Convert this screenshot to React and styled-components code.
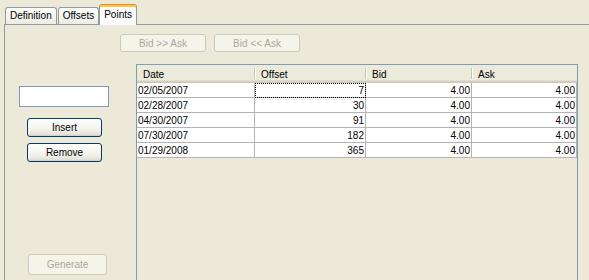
import React from "react";
import styled, { createGlobalStyle } from "styled-components";

const GlobalStyle = createGlobalStyle`
  html, body {
    margin: 0;
    padding: 0;
    background: #ece9d8;
  }
  body {
    font-family: "Liberation Sans", Arial, sans-serif;
    font-size: 10px;
    color: #000;
    overflow: hidden;
  }
`;

const Window = styled.div`
  width: 589px;
  height: 280px;
  box-sizing: border-box;
  padding: 4px 0 0 4px;
  display: flex;
  flex-direction: column;
  overflow: hidden;
`;

/* tab strip */
const TabStrip = styled.div`
  display: flex;
  align-items: flex-end;
  height: 20px;
  padding-left: 1px;
  gap: 1px;
`;

const Tab = styled.div`
  position: relative;
  box-sizing: border-box;
  height: ${(p) => (p.active ? "21px" : "17px")};
  margin-bottom: ${(p) => (p.active ? "-1px" : "0")};
  margin-left: ${(p) => (p.active ? "-1px" : "0")};
  z-index: ${(p) => (p.active ? 2 : 1)};
  padding: ${(p) => (p.active ? "4px 4px 0" : "2px 4px 0")};
  border: 1px solid #919b9c;
  border-bottom: none;
  border-top: ${(p) => (p.active ? "1px solid #e68b2c" : "1px solid #919b9c")};
  border-radius: 3px 3px 0 0;
  background: ${(p) =>
    p.active ? "#fcfcfe" : "linear-gradient(#ffffff, #f3f3ef 60%, #ecebe4)"};
  box-shadow: ${(p) => (p.active ? "inset 0 2px 0 #ffc83c" : "none")};
  white-space: nowrap;
  line-height: 12px;
`;

/* tab body */
const Panel = styled.div`
  flex: 1;
  border-top: 1px solid #919b9c;
  border-left: 1px solid #919b9c;
  display: flex;
  flex-direction: column;
  min-height: 0;
`;

const ButtonRow = styled.div`
  display: flex;
  gap: 8px;
  padding: 9px 0 0 115px;
`;

const Button = styled.button`
  box-sizing: border-box;
  width: ${(p) => p.w || 75}px;
  height: ${(p) => p.h || 19}px;
  margin: 0;
  padding: 0;
  font-family: inherit;
  font-size: 10px;
  color: ${(p) => (p.disabled ? "#aca899" : "#000")};
  border: 1px solid ${(p) => (p.disabled ? "#cdcabb" : "#003c74")};
  border-radius: 3px;
  background: ${(p) =>
    p.disabled
      ? "#f5f4ea"
      : "linear-gradient(#ffffff, #f4f3ee 60%, #e3e2da 90%, #d6d0c5)"};
  box-shadow: ${(p) =>
    p.disabled ? "none" : "inset 0 -1px 0 #d6d0c5, inset 1px 0 0 #f5f5f1"};
  flex-shrink: 0;
`;

const Content = styled.div`
  display: flex;
  margin-top: 12px;
  flex: 1;
  min-height: 0;
`;

const LeftCol = styled.div`
  width: 131px;
  flex-shrink: 0;
  display: flex;
  flex-direction: column;
  align-items: flex-start;
  padding-top: 22px;
`;

const TextField = styled.input`
  box-sizing: border-box;
  width: 90px;
  height: 21px;
  margin: 0 0 11px 14px;
  border: 1px solid #7f9db9;
  background: #fff;
  outline: none;
`;

const Spaced = styled.div`
  margin: ${(p) => p.m};
`;

/* table */
const ScrollPane = styled.div`
  box-sizing: border-box;
  width: 442px;
  height: 240px;
  border: 1px solid #7f9db9;
  background: #ece9d8;
  flex-shrink: 0;
`;

const HeaderRow = styled.div`
  display: flex;
  height: 18px;
  box-sizing: border-box;
  background: #ebeadb;
  box-shadow: inset 0 -1px 0 #cbc7b8, inset 0 -2px 0 #d6d2c2, inset 0 -3px 0 #e2decd;
`;

const HeaderCell = styled.div`
  position: relative;
  width: ${(p) => p.w}px;
  box-sizing: border-box;
  padding: 4px 0 0 6px;
  line-height: 11px;

  &:not(:last-child)::after {
    content: "";
    position: absolute;
    right: 0;
    top: 3px;
    bottom: 4px;
    width: 1px;
    background: #c7c5b2;
    box-shadow: 1px 0 0 #fff;
  }
`;

const Row = styled.div`
  display: flex;
  height: 15px;
  box-sizing: border-box;
  background: #fff;
`;

const Cell = styled.div`
  position: relative;
  width: ${(p) => p.w}px;
  box-sizing: border-box;
  border-right: 1px solid #b4b3b6;
  border-bottom: 1px solid #b4b3b6;
  text-align: ${(p) => (p.num ? "right" : "left")};
  padding: 2px ${(p) => (p.num ? "1px" : "0")} 0 ${(p) => (p.num ? "0" : "1px")};
  line-height: 12px;
  outline: ${(p) => (p.focus ? "1px dotted #000" : "none")};
  outline-offset: -1px;
`;

const widths = [118, 111, 106, 105];

const rows = [
  ["02/05/2007", "7", "4.00", "4.00"],
  ["02/28/2007", "30", "4.00", "4.00"],
  ["04/30/2007", "91", "4.00", "4.00"],
  ["07/30/2007", "182", "4.00", "4.00"],
  ["01/29/2008", "365", "4.00", "4.00"],
];

export default function App() {
  return (
    <>
      <GlobalStyle />
      <Window>
        <TabStrip>
          <Tab>Definition</Tab>
          <Tab>Offsets</Tab>
          <Tab active>Points</Tab>
        </TabStrip>
        <Panel>
          <ButtonRow>
            <Button w={86} h={18} disabled>
              Bid &gt;&gt; Ask
            </Button>
            <Button w={86} h={18} disabled>
              Bid &lt;&lt; Ask
            </Button>
          </ButtonRow>
          <Content>
            <LeftCol>
              <TextField />
              <Spaced m="0 0 6px 22px">
                <Button>Insert</Button>
              </Spaced>
              <Spaced m="0 0 0 22px">
                <Button>Remove</Button>
              </Spaced>
              <Spaced m="92px 0 0 23px">
                <Button w={79} h={21} disabled>
                  Generate
                </Button>
              </Spaced>
            </LeftCol>
            <ScrollPane>
              <HeaderRow>
                {["Date", "Offset", "Bid", "Ask"].map((h, i) => (
                  <HeaderCell key={h} w={widths[i]}>
                    {h}
                  </HeaderCell>
                ))}
              </HeaderRow>
              {rows.map((r, ri) => (
                <Row key={ri}>
                  {r.map((v, ci) => (
                    <Cell
                      key={ci}
                      w={widths[ci]}
                      num={ci > 0}
                      focus={ri === 0 && ci === 1}
                    >
                      {v}
                    </Cell>
                  ))}
                </Row>
              ))}
            </ScrollPane>
          </Content>
        </Panel>
      </Window>
    </>
  );
}
